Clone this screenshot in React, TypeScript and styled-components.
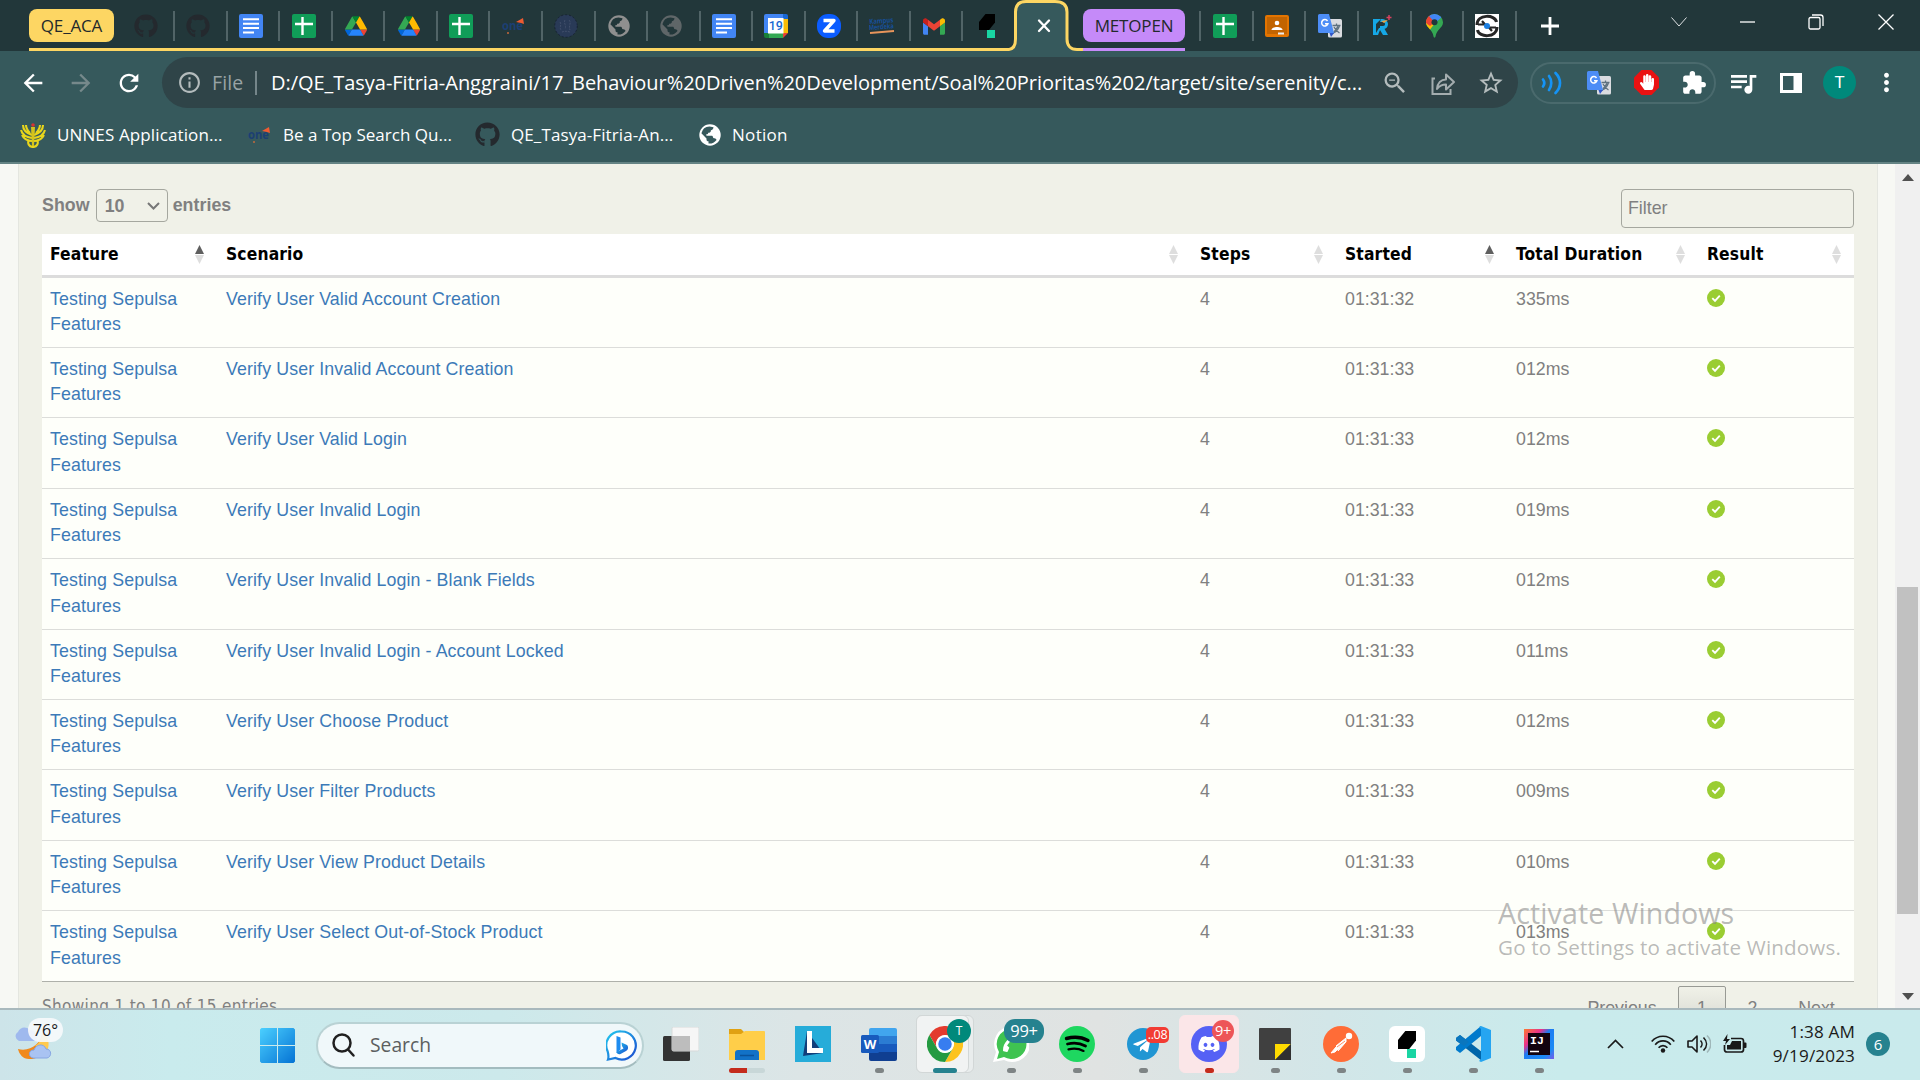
import React from "react";
import styled, { createGlobalStyle } from "styled-components";
import {
  MdArrowBack, MdArrowForward, MdRefresh, MdInfoOutline, MdZoomOut, MdStarBorder,
  MdExtension, MdOutlineQueueMusic, MdMoreVert,
} from "react-icons/md";
import { FaGithub, FaDiscord, FaHandPaper, FaTelegramPlane, FaPhoneAlt } from "react-icons/fa";

const ui = `"Open Sans", "Noto Sans", sans-serif`;
const arial = `"Liberation Sans", Arial, sans-serif`;
const verdana = `"DejaVu Sans Condensed", "DejaVu Sans", sans-serif`;

const GlobalStyle = createGlobalStyle`
  *, *::before, *::after { box-sizing: border-box; }
  body { margin: 0; overflow: hidden; }
  svg { display: block; flex: none; }
`;

const Screen = styled.div`
  width: 1920px;
  height: 1080px;
  overflow: hidden;
  display: flex;
  flex-direction: column;
  background: #f7f8f4;
`;

/* ---------- Tab strip ---------- */

const TabStrip = styled.div`
  height: 51px;
  flex: none;
  display: flex;
  background: #22373a;
`;
const TabGroup = styled.div<{ $line: string; $width: number }>`
  width: ${p => p.$width}px;
  flex: none;
  display: flex;
  border-bottom: 3px solid ${p => p.$line};
`;
const GroupChip = styled.div<{ $bg: string; $width: number; $spacing?: number }>`
  width: ${p => p.$width}px;
  height: 33px;
  margin-top: 9px;
  flex: none;
  border-radius: 8px;
  background: ${p => p.$bg};
  color: #23292b;
  display: flex;
  align-items: center;
  justify-content: center;
  white-space: nowrap;
  font: 400 17px/33px ${ui};
  letter-spacing: ${p => p.$spacing ?? 0}px;
`;
const Tab = styled.div<{ $width?: number; $last?: boolean }>`
  width: ${p => p.$width ?? 52.55}px;
  height: 51px;
  flex: none;
  padding: 11px 6px 0 0;
  display: flex;
  position: relative;
  justify-content: center;
  &::after {
    content: "";
    display: ${p => (p.$last ? "none" : "block")};
    position: absolute;
    right: 0;
    top: 11px;
    width: 2px;
    height: 30px;
    background: #516467;
  }
`;
const TabIcon = styled.div`
  height: 30px;
  display: flex;
  align-items: center;
`;
const ActiveTab = styled.div`
  width: 74px;
  height: 51px;
  flex: none;
`;
const StripGap = styled.div<{ $width: number }>`
  width: ${p => p.$width}px;
  flex: none;
`;
const NewTab = styled.div`
  width: 66px;
  display: flex;
  align-items: center;
  justify-content: center;
`;
const WindowControls = styled.div`
  margin-left: auto;
  display: flex;
  height: 44px;
  align-items: center;
`;
const WindowButton = styled.div<{ $width: number }>`
  width: ${p => p.$width}px;
  display: flex;
  justify-content: center;
`;

/* ---------- Toolbar ---------- */

const Toolbar = styled.div`
  height: 63px;
  flex: none;
  display: flex;
  align-items: center;
  background: #36595c;
`;
const NavButtons = styled.div`
  width: 162px;
  display: flex;
  padding-left: 19px;
  gap: 20px;
  color: #fff;
`;
const Omnibox = styled.div`
  width: 1356px;
  height: 51px;
  border-radius: 26px;
  background: #2f4448;
  display: flex;
  align-items: center;
  padding-left: 15px;
  color: #b4bcbd;
`;
const Scheme = styled.span`
  width: 43px;
  margin-left: 10px;
  font: 400 19.5px/26px ${ui};
  color: #98a3a5;
  letter-spacing: 0.1px;
`;
const Divider = styled.span`
  width: 2px;
  height: 24px;
  background: #75868a;
`;
const Url = styled.span`
  width: 1110px;
  margin-left: 14px;
  white-space: nowrap;
  overflow: hidden;
  color: #fff;
  font: 400 20px/28px ${ui};
  letter-spacing: -0.04px;
`;
const OmniActions = styled.div`
  display: flex;
  gap: 20px;
`;
const Extensions = styled.div`
  width: 186px;
  height: 42px;
  margin-left: 12px;
  border: 2px solid #4a6a6d;
  border-radius: 21px;
  display: flex;
  align-items: center;
  justify-content: space-between;
  padding: 0 6px;
`;
const BrowserActions = styled.div`
  display: flex;
  align-items: center;
  color: #fff;
  padding-left: 11px;
`;
const Avatar = styled.div<{ $size: number; $font: number }>`
  width: ${p => p.$size}px;
  height: ${p => p.$size}px;
  border-radius: 50%;
  background: #00897b;
  color: #fff;
  text-align: center;
  font: 400 ${p => p.$font}px/${p => p.$size}px Roboto, sans-serif;
`;
const Action = styled.div<{ $width: number }>`
  width: ${p => p.$width}px;
  display: flex;
  justify-content: center;
`;

const Bookmarks = styled.div`
  height: 50px;
  flex: none;
  display: flex;
  background: #36595c;
  border-bottom: 2px solid #648384;
  padding: 0 0 7px 20px;
`;
const Bookmark = styled.div<{ $width: number; $spacing: number }>`
  width: ${p => p.$width}px;
  display: flex;
  align-items: center;
  gap: 11px;
  white-space: nowrap;
  color: #fff;
  font: 400 17px/24px ${ui};
  letter-spacing: ${p => p.$spacing}px;
`;

/* ---------- Report page ---------- */

const Viewport = styled.div`
  height: 844px;
  flex: none;
  display: flex;
  overflow: hidden;
  background: #f7f8f4;
`;
const Report = styled.main`
  width: 1860px;
  margin-left: 18px;
  padding: 25px 23px 0 23px;
  border: solid #e4e6e0;
  border-width: 0 1px;
  background: #f0f1e8;
  color: #808080;
`;
const Controls = styled.div`
  height: 45px;
  display: flex;
  justify-content: space-between;
`;
const LengthControl = styled.div`
  height: 33px;
  display: flex;
  align-items: center;
  font: 700 17.8px/35px ${arial};
  letter-spacing: 0.05px;
`;
const LengthSelect = styled.div`
  width: 72px;
  height: 33px;
  margin: 0 5px 0 6px;
  padding: 1px 7px 0 8px;
  border: 1px solid #a5a79f;
  border-radius: 4px;
  display: flex;
  align-items: center;
  justify-content: space-between;
`;
const FilterBox = styled.div`
  width: 233px;
  height: 39px;
  padding-left: 6px;
  border: 1px solid #a5a79f;
  border-radius: 4px;
  font: 400 17.8px/37px ${arial};
`;
const columns = "175px 974px 145px 171px 191px 156px";
const HeaderRow = styled.div`
  height: 43.6px;
  display: grid;
  grid-template-columns: ${columns};
  background: #fff;
  border-bottom: 3px solid #dcdcdc;
`;
const HeaderCell = styled.div`
  display: flex;
  justify-content: space-between;
  align-items: center;
  padding: 0 13px 0 9px;
  color: #000;
  font: 700 17.3px/22px ${verdana};
  letter-spacing: 0.15px;
  &:first-child { padding-left: 8px; }
`;
const Body = styled.div`
  border-bottom: 1px solid #aeb0aa;
`;
const Row = styled.div`
  height: 70.4px;
  display: grid;
  grid-template-columns: ${columns};
  background: #fefffa;
  border-bottom: 1px solid #dcddda;
  &:last-child { height: 69.8px; border-bottom: 0; }
`;
const Cell = styled.div<{ $link?: boolean }>`
  padding: 9px 20px 0 9px;
  font: 400 17.8px/25.4px ${arial};
  color: ${p => (p.$link ? "#3c7ab8" : "#808080")};
  letter-spacing: ${p => (p.$link ? 0.11 : 0)}px;
  &:first-child { padding-left: 8px; }
`;
const Result = styled.div`
  padding: 11px 0 0 9px;
`;
const Footer = styled.div`
  display: flex;
  justify-content: space-between;
  font: 400 17px/22px ${verdana};
`;
const Info = styled.div`
  padding-top: 13px;
  letter-spacing: 0.33px;
`;
const Pager = styled.div`
  display: flex;
  padding-top: 4px;
`;
const PageButton = styled.div<{ $current?: boolean; $width: number }>`
  width: ${p => p.$width}px;
  height: 40px;
  text-align: center;
  padding-top: ${p => (p.$current ? 10 : 11)}px;
  border: ${p => (p.$current ? "1px solid #989a94" : "0")};
  border-radius: 2px;
  background: ${p => (p.$current ? "linear-gradient(#f0f1e8, #d8d9d1)" : "none")};
  font: 400 17.8px/22px ${arial};
`;
const Scrollbar = styled.div`
  width: 25px;
  margin-left: auto;
  display: flex;
  flex-direction: column;
  align-items: center;
  background: #f0f0f0;
  padding: 10px 0 8px;
`;
const Thumb = styled.div`
  width: 21px;
  height: 327px;
  margin: 406px 0 auto;
  background: #c1c1c1;
`;

/* ---------- Watermark ---------- */

const Watermark = styled.div`
  position: absolute;
  left: 1498px;
  top: 893px;
  white-space: nowrap;
  color: rgba(135, 135, 135, 0.58);
  font-family: ${ui};
`;
const WatermarkTitle = styled.div`
  font-size: 28.6px;
  line-height: 39px;
  letter-spacing: 0.1px;
`;
const WatermarkText = styled.div`
  font-size: 20.6px;
  line-height: 31px;
  letter-spacing: 0.16px;
`;

/* ---------- Taskbar ---------- */

const Taskbar = styled.footer`
  height: 72px;
  flex: none;
  display: flex;
  align-items: center;
  border-top: 2px solid #a9b9bd;
  background: linear-gradient(90deg, #cde4e9 0, #c9ebed 170px, #cce9eb 500px, #dce5e6 800px, #e0e3e2 1100px, #d2e6e8 1330px, #c9ebec 1560px, #c9eaec 1920px);
`;
const Weather = styled.div`
  width: 248px;
  height: 70px;
  padding: 8px 0 0 13px;
  display: grid;
  grid-template-columns: 52px;
`;
const WeatherArt = styled.div`
  grid-area: 1 / 1;
`;
const Temperature = styled.div`
  grid-area: 1 / 1;
  z-index: 1;
  width: 35px;
  height: 24px;
  margin-left: 15px;
  border-radius: 12px;
  background: rgba(247, 250, 252, 0.9);
  color: #1b1b1b;
  text-align: center;
  font: 400 16px/24px ${ui};
`;
const StartButton = styled.div`
  width: 68px;
  padding-left: 12px;
`;
const SearchBox = styled.div`
  width: 328px;
  height: 47px;
  padding: 0 5px 0 14px;
  border: 2px solid #b9d2d4;
  border-bottom-color: #a3bcbf;
  border-radius: 24px;
  background: #f0f8fa;
  display: flex;
  align-items: center;
  color: #5c5f60;
  font: 400 19.3px/26px ${ui};
`;
const SearchLabel = styled.span`
  margin-left: 14px;
  margin-right: auto;
`;
const Apps = styled.div`
  display: flex;
  margin-left: 4px;
`;
const TaskbarApp = styled.div`
  width: 66px;
  height: 70px;
  display: flex;
  align-items: center;
  justify-content: center;
  position: relative;
`;
const AppTile = styled.div<{ $bg: string; $width: number; $edge?: string; $left?: number }>`
  position: absolute;
  left: ${p => p.$left ?? 3}px;
  top: 5px;
  width: ${p => p.$width}px;
  height: 58px;
  border-radius: 6px;
  border: 1px solid ${p => p.$edge ?? p.$bg};
  background: ${p => p.$bg};
`;
const AppArt = styled.div`
  position: relative;
  margin-top: -2px;
`;
const Indicator = styled.div<{ $width: number; $color: string; $track?: boolean }>`
  position: absolute;
  bottom: 7px;
  left: ${p => (p.$track ? 15 : 33 - p.$width / 2)}px;
  width: ${p => (p.$track ? 36 : p.$width)}px;
  height: 5px;
  border-radius: 3px;
  background: ${p => (p.$track ? `linear-gradient(90deg, ${p.$color} 50%, #c8d7d8 50%)` : p.$color)};
`;
const Badge = styled.div<{ $x: number; $y: number; $w: number; $h: number; $bg: string; $font: number; $r?: number }>`
  position: absolute;
  left: ${p => p.$x}px;
  top: ${p => p.$y}px;
  width: ${p => p.$w}px;
  height: ${p => p.$h}px;
  border-radius: ${p => p.$r ?? p.$h / 2}px;
  background: ${p => p.$bg};
  color: #fff;
  text-align: center;
  font: 400 ${p => p.$font}px/${p => p.$h}px ${ui};
  letter-spacing: -0.3px;
`;
const Tray = styled.div`
  margin-left: auto;
  margin-right: 30px;
  display: flex;
  align-items: center;
  color: #1a1a1a;
`;
const TrayIcon = styled.div<{ $width: number }>`
  width: ${p => p.$width}px;
  margin-top: -2px;
`;
const Clock = styled.div`
  width: 108px;
  margin-top: -2px;
  text-align: right;
  font: 400 17.1px/24px ${ui};
  letter-spacing: 0.15px;
`;
const Notifications = styled.div`
  width: 24px;
  height: 24px;
  margin-top: -2px;
  margin-left: 11px;
  border-radius: 50%;
  background: #26828f;
  color: #fff;
  text-align: center;
  font: 400 15px/24px ${ui};
`;

/* ---------- Icons ---------- */

const Docs = () => (
  <svg width="24" height="24" viewBox="0 0 24 24"><rect width="24" height="24" rx="2" fill="#4285f4" /><path d="M4 5.3h16M4 9.7h16M4 14.1h16M4 18.5h11" stroke="#fff" strokeWidth="2" /></svg>
);
const Sheets = () => (
  <svg width="24" height="24" viewBox="0 0 24 24"><rect width="24" height="24" rx="2" fill="#109d58" /><path d="M3 10h18M10.5 3v18" stroke="#fff" strokeWidth="2.4" /></svg>
);
const Drive = () => (
  <svg width="22" height="20" viewBox="0 0 87.3 78">
    <path d="M6.6 66.85l3.85 6.65c.8 1.4 1.95 2.5 3.3 3.3L27.5 53H0c0 1.55.4 3.1 1.2 4.5z" fill="#0066da" />
    <path d="M43.65 25L29.9 1.2c-1.35.8-2.5 1.9-3.3 3.3l-25.4 44A9.06 9.06 0 000 53h27.5z" fill="#34a853" />
    <path d="M73.55 76.8c1.35-.8 2.5-1.9 3.3-3.3l1.6-2.75L86.1 57.5c.8-1.4 1.2-2.95 1.2-4.5H59.8l5.85 11.5z" fill="#ea4335" />
    <path d="M43.65 25L57.4 1.2C56.05.4 54.5 0 52.9 0H34.4c-1.6 0-3.15.45-4.5 1.2z" fill="#00832d" />
    <path d="M59.8 53H27.5L13.75 76.8c1.35.8 2.9 1.2 4.5 1.2h50.8c1.6 0 3.15-.45 4.5-1.2z" fill="#2684fc" />
    <path d="M73.4 26.5l-12.7-22c-.8-1.4-1.95-2.5-3.3-3.3L43.65 25 59.8 53h27.45c0-1.55-.4-3.1-1.2-4.5z" fill="#ffba00" />
  </svg>
);
const OneLogo = () => (
  <svg width="24" height="18" viewBox="0 0 24 18">
    <text x="0" y="13" fontFamily="Open Sans" fontSize="12" fontWeight="700" fill="#1c3f73" textLength="21" lengthAdjust="spacingAndGlyphs">one</text>
    <path d="M14 5l7-4 1 6-3-1z" fill="#ee5b32" /><circle cx="6" cy="16" r="1" fill="#c46a3b" />
  </svg>
);
const Seal = () => (
  <svg width="24" height="24" viewBox="0 0 24 24"><circle cx="12" cy="12" r="11.3" fill="#293a57" stroke="#182333" strokeDasharray="2 2" /><path d="M6 8c2 3-1 5 1 8M11 6c-2 3 2 5 0 9M15 6c3 3-1 6 1 10M8 18c2-1 5-1 8 0" stroke="#414f6b" fill="none" strokeDasharray="2 1" /></svg>
);
const Globe = ({ color, ink }: { color: string; ink: string }) => (
  <svg width="22" height="22" viewBox="0 0 22 22">
    <circle cx="11" cy="11" r="10.7" fill={color} />
    <path d="M10.5 2.6l4 .6c-.2 2-1 2.6-2.6 3 .2 2-1.2 2.6-2.7 2.6 0 1.3-.9 1.6-2 1.5l.3 1.4h5c1 0 1.5.7 1.5 1.6 0 .8.8 1 1.5 1 1 0 1.7.8 2 1.6a9 9 0 01-8 3.6v-2.2c-1.5 0-2-.8-2-1.9v-1L2.4 9.3A8.800 8.800 0 0110.500 2.600z" fill={ink} />
  </svg>
);
const Calendar = () => (
  <svg width="24" height="24" viewBox="0 0 24 24">
    <path d="M0 2a2 2 0 012-2h17v5H5v14H0z" fill="#4285f4" /><path d="M19 0h3a2 2 0 012 2v3h-5z" fill="#1967d2" />
    <path d="M19 5h5v14h-5z" fill="#fbbc04" /><path d="M0 19h5v5H2a2 2 0 01-2-2z" fill="#188038" /><path d="M5 19h14v5H5z" fill="#34a853" /><path d="M19 19h5l-5 5z" fill="#ea4335" />
    <rect x="4" y="4" width="15.500" height="15.500" fill="#fff" /><text x="11.800" y="16.300" textAnchor="middle" fontFamily="Roboto" fontWeight="500" fontSize="12.500" fill="#1967d2">19</text>
  </svg>
);
const ZLogo = () => (
  <svg width="24" height="24" viewBox="0 0 24 24"><rect width="24" height="24" rx="11" fill="#0b5cff" /><path d="M6.500 6.500h10.500l-9.500 10.500h10" stroke="#fff" strokeWidth="3.400" fill="none" strokeLinejoin="round" /></svg>
);
const Kampus = () => (
  <svg width="26" height="18" viewBox="0 0 26 18">
    <g transform="rotate(-4)" fontFamily="Open Sans" fontWeight="700" fill="#16509a"><text x="0" y="7" fontSize="7" textLength="24" lengthAdjust="spacingAndGlyphs">Kampus</text><text x="-1" y="13" fontSize="7" textLength="25" lengthAdjust="spacingAndGlyphs">Merdeka</text></g>
    <path d="M1 16l24-2" stroke="#e8955b" strokeWidth="1.800" />
  </svg>
);
const Gmail = () => (
  <svg width="22" height="17" viewBox="52 42 88 66">
    <path fill="#4285f4" d="M58 108h14V74L52 59v43c0 3.320 2.690 6 6 6" /><path fill="#34a853" d="M120 108h14c3.320 0 6-2.690 6-6V59l-20 15" />
    <path fill="#fbbc04" d="M120 48v26l20-15v-8c0-7.420-8.470-11.650-14.400-7.200" /><path fill="#ea4335" d="M72 74V48l24 18 24-18v26L96 92" /><path fill="#c5221f" d="M52 51v8l20 15V48l-5.600-4.200c-5.940-4.450-14.400-.22-14.400 7.200" />
  </svg>
);
const Katalon = ({ size }: { size: number }) => (
  <svg width={size} height={size * 1.5} viewBox="0 0 16 24"><path d="M6.500 0H16v8.500L10 16H0V8z" fill="#000" /><rect x="8" y="16" width="8" height="8" fill="#19d5a3" /></svg>
);
const Classroom = () => (
  <svg width="24" height="22" viewBox="0 0 24 22"><rect width="24" height="22" rx="2" fill="#e37400" /><rect x="2" y="2" width="20" height="17" fill="#c26401" /><circle cx="12" cy="8" r="2.300" fill="#fff" /><path d="M6.500 15c0-4 11-4 11 0z" fill="#fff" /><rect x="13" y="17.500" width="6" height="2" fill="#eee" /></svg>
);
const Translate = () => (
  <svg width="24" height="24" viewBox="0 0 24 24">
    <rect x="10" y="5" width="14" height="18.500" rx="1.500" fill="#dadce0" /><path d="M15 19.500l5-7M14.500 11.500h8M18.500 9.500v2M21.500 11.500c-1 4-3 6-6 7.500M16 13c1.500 3 3 4.500 5.500 6" stroke="#5f7280" strokeWidth="1.300" fill="none" />
    <path d="M1.500 0H11l5 19H1.500A1.500 1.500 0 010 17.500v-16A1.500 1.500 0 011.500 0z" fill="#4d8df6" /><path d="M11.500 19H16l-3 4z" fill="#3157c8" />
    <path d="M9.500 7A3.200 3.200 0 109.900 9.800H7" stroke="#fff" strokeWidth="1.500" fill="none" />
  </svg>
);
const RBird = () => (
  <svg width="20" height="22" viewBox="0 0 20 22"><path d="M1 4h8l-5 5v9l3-5 5 0 4 7h-5l-3-5-2 5H1z" fill="#15a8e6" /><path d="M9 4c4 0 7 2 7 5 0 3-2 5-5 5H8V11h3c1.500 0 2-1 2-2s-1-2-2-2H8z" fill="#15a8e6" /><path d="M9 6l7-1-4 3z" fill="#e9a23c" /><path d="M14.500 2.500h5M17 0v5" stroke="#d6415f" strokeWidth="1.500" /></svg>
);
const MapsPin = () => (
  <svg width="17" height="24" viewBox="0 0 17 24">
    <clipPath id="pin"><path d="M8.500 0A8.400 8.400 0 000 8.500C0 14 6.500 15 7.500 22.500c.2 1.500 1.800 1.500 2 0C10.500 15 17 14 17 8.500A8.400 8.400 0 008.500 0z" /></clipPath>
    <g clipPath="url(#pin)"><path d="M0 0h17v24H0z" fill="#34a853" /><path d="M0 15V6l9 3L3 17z" fill="#fbbc04" /><path d="M0 0h5l4 8-5 4-4-3z" fill="#ea4335" /><path d="M3 2L9 9l7-6-3-3H5z" fill="#4285f4" /><path d="M2 2l6 6-5 3-3-5z" fill="#ea4335" /></g>
    <circle cx="8.500" cy="8.300" r="3" fill="#20373a" />
  </svg>
);
const Orbit = () => (
  <svg width="24" height="24" viewBox="0 0 24 24"><rect width="24" height="24" fill="#fff" /><path d="M2 11C2 0 20 0 21.500 8M22 13c0 11-18 11-19.500 3" stroke="#262626" strokeWidth="3" fill="none" /><path d="M3 10.500h7L7 7M21 13.500h-7l3 3.500" stroke="#262626" strokeWidth="2.200" fill="none" /><circle cx="12" cy="12" r="3" fill="#1b7ee0" /></svg>
);
const Garuda = () => (
  <svg width="26" height="26" viewBox="0 0 26 26"><g fill="none" stroke="#e8d51c" strokeWidth="2.100"><path d="M12 13C6 11 3 7 3 3M12 16C5 15 2 12 1 8M12 19c-5 0-8-2-10-6M14 13c6-2 9-6 9-10M14 16c7-1 10-4 11-8M14 19c5 0 8-2 10-6M10 11C8 9 6 6 6 3M16 11c2-2 4-5 4-8" /><path d="M9 18c-2 3 0 7 4 7s6-4 4-7" /></g><path d="M11 5h4l-1 19h-2z" fill="#d4c21c" /><circle cx="13" cy="3" r="1.800" fill="#d83232" /></svg>
);
const ShareIcon = () => (
  <svg width="28" height="28" viewBox="0 0 28 28" fill="none" stroke="#a4adaf" strokeWidth="2"><path d="M6 9.500H3.500V25h18v-5" /><path d="M8 20c.5-6 4-9.500 9-9.500V5.500l8 7.500-8 7.500v-5c-4 0-6.500 1-9 4.500z" strokeLinejoin="round" /></svg>
);
const Waves = () => (
  <svg width="22" height="24" viewBox="0 0 22 24" fill="none" stroke="#1593f5" strokeWidth="2.700" strokeLinecap="round"><path d="M2 8.500c1.500 2 1.500 5 0 7M8 5c3 4 3 10 0 14M14.500 2c6 6 6 14 0 20" /></svg>
);
const StopHand = () => (
  <svg width="25" height="25" viewBox="0 0 25 25"><path d="M7.500 0h10L25 7.500v10L17.500 25h-10L0 17.500v-10z" fill="#ea1212" /><g transform="translate(5 4)"><FaHandPaper size={16} color="#fff" /></g></svg>
);
const SidePanel = () => (
  <svg width="22" height="22" viewBox="0 0 22 22"><path d="M0 1h22v20H0z" fill="#fff" /><path d="M3 4h10.500v14H3z" fill="#36595c" /></svg>
);
const Check = () => (
  <svg width="18" height="18" viewBox="0 0 18 18"><circle cx="9" cy="9" r="9" fill="#9acd32" /><path d="M5.300 9.200l2.700 2.700 4.800-5.300" stroke="#fff" strokeWidth="1.900" fill="none" /></svg>
);
const SortArrows = ({ up }: { up?: boolean }) => (
  <svg width="9" height="19" viewBox="0 0 9 19"><path d="M4.500 0L9 9H0z" fill={up ? "#5f5f5f" : "#dedede"} /><path d="M0 10h9l-4.500 9z" fill="#dedede" /></svg>
);
const Arrow = ({ down }: { down?: boolean }) => (
  <svg width="12" height="7" viewBox="0 0 12 7"><path d={down ? "M0 0h12L6 7z" : "M6 0l6 7H0z"} fill="#505050" /></svg>
);

const WindowsLogo = () => (
  <svg width="35" height="35" viewBox="0 0 35 35">
    <defs><linearGradient id="win" x1="0" y1="0" x2="1" y2="1" gradientUnits="objectBoundingBox"><stop offset="0" stopColor="#4bd0ff" /><stop offset="1" stopColor="#0573d4" /></linearGradient></defs>
    <path d="M1.500 0H17v17H0V1.500zM18 0h15.500L35 1.500V17H18zM0 18h17v17H1.500L0 33.500zM18 18h17v15.500L33.500 35H18z" fill="url(#win)" />
  </svg>
);
const Bing = () => (
  <svg width="31" height="31" viewBox="0 0 31 31">
    <defs><linearGradient id="bing" x1="0" y1="0" x2="1" y2="1"><stop offset="0" stopColor="#22c9ee" /><stop offset="1" stopColor="#1b4bd0" /></linearGradient></defs>
    <path d="M15.500 1.500a14 14 0 11-6 26.500L2 29.500c1-3 .5-5-.3-8A14 14 0 0115.500 1.500z" fill="#fff" stroke="url(#bing)" strokeWidth="2.200" />
    <path d="M10.500 6l4 1.500v12l-4 3.500z" fill="#1f8cf0" /><path d="M15.500 12.500l5.500 2.500c2 2 1 5-1 6l-5.500 3c-2 .7-4-.5-4-2l7-3.500-1.500-2.500z" fill="url(#bing)" />
  </svg>
);
const SearchGlyph = () => (
  <svg width="24" height="26" viewBox="0 0 24 26" fill="none" stroke="#202020" strokeWidth="2.500" strokeLinecap="round"><circle cx="10" cy="11" r="8.500" /><path d="M16.500 18l5 5.500" /></svg>
);
const WeatherIcon = () => (
  <svg width="46" height="44" viewBox="0 0 46 44">
    <path d="M29 15c9 12 0 27-13 26C10 41 6 36 5 31c12 3 23-5 24-16z" fill="#f08a1d" />
    <path d="M30 14c6 5 7 13 4 19l-12-5c5-3 7-8 8-14z" fill="#ffc94d" />
    <path d="M6 23a5 5 0 01-1-9c2-5 8-6 12-2 4 0 7 4 7 11z" fill="#9fb9ee" />
    <path d="M20 40c-5-1-5-8 1-8 2-6 10-7 12-1 6 0 6 8 1 9z" fill="#a9c3f2" stroke="#86a6e3" />
  </svg>
);
const TaskView = () => (
  <svg width="36" height="34" viewBox="0 0 36 34"><rect y="9" width="27" height="25" rx="1.500" fill="#333" /><rect x="9" y="0" width="27" height="24" rx="1.500" fill="#f6f6f6" stroke="#d7dada" /><path d="M9 9h18v15H9z" fill="#bdbdbd" /></svg>
);
const Explorer = () => (
  <svg width="36" height="33" viewBox="0 0 36 33"><path d="M0 1h12l3 3v6H0z" fill="#e0a112" /><path d="M0 6h12l4-3h19a1 1 0 011 1v28H0z" fill="#ffce49" /><path d="M6 32v-7c0-2 1-3 3-3h18c2 0 3 1 3 3v7z" fill="#1272c7" /><path d="M11 27.500h14" stroke="#0a529a" strokeWidth="1.500" /></svg>
);
const LApp = () => (
  <svg width="36" height="36" viewBox="0 0 36 36"><rect width="36" height="36" fill="#26acd9" /><path d="M12 5l-4 25 20-3z" fill="#123f7a" /><path d="M12 5h5v17h11v5H12z" fill="#fff" /></svg>
);
const Word = () => (
  <svg width="36" height="33" viewBox="0 0 36 33"><path d="M8 2q0-2 2-2h24q2 0 2 2v6H8z" fill="#41a5ee" /><path d="M8 8h28v8H8z" fill="#2b7cd3" /><path d="M8 16h28v8H8z" fill="#185abd" /><path d="M8 24h28v7q0 2-2 2H10q-2 0-2-2z" fill="#103f91" /><rect y="7" width="18" height="18" rx="1.500" fill="#185abd" /><text x="9" y="20.500" fontFamily="Open Sans" fontWeight="700" fontSize="13" textAnchor="middle" fill="#fff">W</text></svg>
);
const Chrome = () => (
  <svg width="36" height="36" viewBox="0 0 48 48"><circle cx="24" cy="24" r="24" fill="#fff" /><path d="M24 12h20.800A24 24 0 003.200 12l10.400 18A12 12 0 0124 12z" fill="#e33b2e" /><path d="M34.400 30L24 48A24 24 0 0044.800 12H24a12 12 0 0110.400 18z" fill="#fcc31e" /><path d="M13.600 30L3.200 12A24 24 0 0024 48l10.400-18a12 12 0 01-20.800 0z" fill="#249a41" /><circle cx="24" cy="24" r="11.500" fill="#fff" /><circle cx="24" cy="24" r="9" fill="#377df0" /></svg>
);
const WhatsApp = () => (
  <svg width="36" height="36" viewBox="0 0 36 36"><path d="M18 0a18 18 0 11-7 34L0 36l3-10A18 18 0 0118 0z" fill="#fff" /><path d="M18 3a15 15 0 11-7 28l-7 2 2-7A15 15 0 0118 3z" fill="#3fc351" /><g transform="translate(10 10) rotate(90 8 8)"><FaPhoneAlt size={16} color="#fff" /></g></svg>
);
const Spotify = () => (
  <svg width="36" height="36" viewBox="0 0 36 36"><circle cx="18" cy="18" r="18" fill="#1ed760" /><g fill="none" stroke="#000" strokeLinecap="round"><path d="M7.500 12.500c7-2 15-1.500 21.500 2" strokeWidth="3.400" /><path d="M8.500 18c6-1.500 12.500-1 18 2" strokeWidth="2.800" /><path d="M9.500 23.300c5-1.200 10.500-.8 15 1.600" strokeWidth="2.300" /></g></svg>
);
const Telegram = () => (
  <svg width="32" height="32" viewBox="0 0 32 32"><circle cx="16" cy="16" r="16" fill="#2196d3" /><g transform="translate(5 7)"><FaTelegramPlane size={20} color="#fff" /></g></svg>
);
const Discord = () => (
  <svg width="36" height="36" viewBox="0 0 36 36"><circle cx="18" cy="18" r="18" fill="#5561f5" /><g transform="translate(6.500 6.500)"><FaDiscord size={23} color="#fff" /></g></svg>
);
const Sticky = () => (
  <svg width="32" height="32" viewBox="0 0 32 32"><rect width="32" height="32" rx="1" fill="#404040" /><path d="M16 16h16L16 32z" fill="#ffdb00" /><path d="M32 16v16H16z" fill="#303030" /></svg>
);
const Postman = () => (
  <svg width="36" height="36" viewBox="0 0 36 36"><circle cx="18" cy="18" r="18" fill="#ff6c37" /><circle cx="26" cy="10" r="3.200" fill="#fff" /><path d="M23 12L13 20l2 2 8-6zM13 21l-5 6 4-1 4-4zM22 17l-5 4-2 4z" fill="#fff" stroke="#fff" /><path d="M14 21l8-6" stroke="#ff6c37" strokeWidth=".8" /></svg>
);
const KatalonTile = styled.div`
  width: 36px;
  height: 36px;
  border-radius: 6px;
  background: #fff;
  display: flex;
  align-items: center;
  justify-content: center;
`;
const VsCode = () => (
  <svg width="36" height="36" viewBox="0 0 36 36"><path d="M1 12l4-3 22 17v9L1 14.500z" fill="#0065a9" /><path d="M26 0v10L5 27l-4-3v-3z" fill="#007acc" /><path d="M1 12l4-3 9 7-5 4-8-5.500z" fill="#0a76be" /><path d="M26 0l10 4v28l-10 4-2-1 2-2V3l-2-2z" fill="#25a5f1" /></svg>
);
const IntelliJ = () => (
  <svg width="30" height="30" viewBox="0 0 30 30"><defs><linearGradient id="ij" x1="0" y1="0" x2="1" y2="1"><stop offset="0" stopColor="#fc7a2f" /><stop offset=".3" stopColor="#e8308b" /><stop offset=".45" stopColor="#1d7cf2" /><stop offset=".8" stopColor="#1b8af5" /><stop offset="1" stopColor="#7a5be8" /></linearGradient></defs><rect width="30" height="30" fill="url(#ij)" /><rect x="4" y="4" width="22" height="22" fill="#12030f" /><text x="6" y="15" fontFamily="Liberation Mono" fontWeight="700" fontSize="11.500" fill="#fff">IJ</text><path d="M6 22.500h9" stroke="#fff" strokeWidth="1.500" /></svg>
);

/* ---------- Data ---------- */

const groupTabs: React.ReactNode[] = [
  <FaGithub size={24} color="#24292e" />, <FaGithub size={24} color="#24292e" />,
  <Docs />, <Sheets />, <Drive />, <Drive />, <Sheets />, <OneLogo />, <Seal />,
  <Globe color="#8f8f8f" ink="#22373a" />, <Globe color="#5f6668" ink="#22373a" />,
  <Docs />, <Calendar />, <ZLogo />, <Kampus />, <Gmail />, <Katalon size={16} />,
];
const metopenTabs = [<Sheets />, <Classroom />, <Translate />, <RBird />, <MapsPin />, <Orbit />];

const scenarios: [string, string, string][] = [
  ["Verify User Valid Account Creation", "01:31:32", "335ms"],
  ["Verify User Invalid Account Creation", "01:31:33", "012ms"],
  ["Verify User Valid Login", "01:31:33", "012ms"],
  ["Verify User Invalid Login", "01:31:33", "019ms"],
  ["Verify User Invalid Login - Blank Fields", "01:31:33", "012ms"],
  ["Verify User Invalid Login - Account Locked", "01:31:33", "011ms"],
  ["Verify User Choose Product", "01:31:33", "012ms"],
  ["Verify User Filter Products", "01:31:33", "009ms"],
  ["Verify User View Product Details", "01:31:33", "010ms"],
  ["Verify User Select Out-of-Stock Product", "01:31:33", "013ms"],
];
const headers: [string, boolean][] = [
  ["Feature", true], ["Scenario", false], ["Steps", false], ["Started", true], ["Total Duration", false], ["Result", false],
];

const disabled = "#76898b";
const running = "#7e8485";

export default function App() {
  return (
    <Screen>
      <GlobalStyle />
      <TabStrip>
        <StripGap $width={29} />
        <TabGroup $line="#fdd663" $width={980}>
          <GroupChip $bg="#fdd663" $width={85} $spacing={-0.15}>QE_ACA</GroupChip>
          <StripGap $width={8.6} />
          {groupTabs.map((icon, i) => (
            <Tab key={i} $last={i === groupTabs.length - 1}><TabIcon>{icon}</TabIcon></Tab>
          ))}
        </TabGroup>
        <ActiveTab>
          <svg width="74" height="51" viewBox="0 0 74 51">
            <path d="M-1 49.500C5 49.500 6.500 45 6.500 39V12C6.500 5 10 1.500 17 1.500H46C54 1.500 58 5 58 12V39C58 45 61 49.500 68 49.500H74V51H-1z" fill="#36595c" />
            <path d="M-1 49.500C5 49.500 6.500 45 6.500 39V12C6.500 5 10 1.500 17 1.500H46C54 1.500 58 5 58 12V39C58 45 61 49.500 68 49.500H74" fill="none" stroke="#fdd663" strokeWidth="3" />
            <path d="M30 20.500l10 10.500M40 20.500L30 31" stroke="#fff" strokeWidth="2.300" strokeLinecap="round" />
          </svg>
        </ActiveTab>
        <TabGroup $line="#c58af9" $width={102}>
          <GroupChip $bg="#c58af9" $width={102} $spacing={-0.15}>METOPEN</GroupChip>
        </TabGroup>
        <Tab $width={16.4} />
        {metopenTabs.map((icon, i) => <Tab key={i}><TabIcon>{icon}</TabIcon></Tab>)}
        <NewTab>
          <svg width="18" height="18" viewBox="0 0 18 18"><path d="M9 0v18M0 9h18" stroke="#fff" strokeWidth="2.800" /></svg>
        </NewTab>
        <WindowControls>
          <WindowButton $width={68}><svg width="16" height="10" viewBox="0 0 16 10"><path d="M.5.500L8 9 15.500.500" stroke="#dfe3e4" fill="none" /></svg></WindowButton>
          <WindowButton $width={68}><svg width="15" height="2" viewBox="0 0 15 2"><path d="M0 1h15" stroke="#fff" strokeWidth="1.300" /></svg></WindowButton>
          <WindowButton $width={70}><svg width="16" height="16" viewBox="0 0 16 16"><g fill="none" stroke="#fff" strokeWidth="1.300"><rect x="1" y="3.500" width="11" height="11.500" rx="1.500" /><path d="M4 1h8.500Q15 1 15 3.500V12" /></g></svg></WindowButton>
          <WindowButton $width={69}><svg width="16" height="16" viewBox="0 0 16 16"><path d="M.5.500l15 15M15.500.500l-15 15" stroke="#fff" strokeWidth="1.300" /></svg></WindowButton>
        </WindowControls>
      </TabStrip>

      <Toolbar>
        <NavButtons>
          <MdArrowBack size={28} /><MdArrowForward size={28} color={disabled} /><MdRefresh size={28} />
        </NavButtons>
        <Omnibox>
          <MdInfoOutline size={25} />
          <Scheme>File</Scheme>
          <Divider />
          <Url>D:/QE_Tasya-Fitria-Anggraini/17_Behaviour%20Driven%20Development/Soal%20Prioritas%202/target/site/serenity/c...</Url>
          <OmniActions>
            <MdZoomOut size={28} /><ShareIcon /><MdStarBorder size={28} />
          </OmniActions>
        </Omnibox>
        <Extensions>
          <Action $width={28}><Waves /></Action>
          <Action $width={28}><Translate /></Action>
          <Action $width={28}><StopHand /></Action>
          <Action $width={28}><MdExtension size={26} color="#fff" /></Action>
        </Extensions>
        <BrowserActions>
          <Action $width={31}><MdOutlineQueueMusic size={32} /></Action>
          <Action $width={65}><SidePanel /></Action>
          <Action $width={33}><Avatar $size={33} $font={17}>T</Avatar></Action>
          <Action $width={61}><MdMoreVert size={29} /></Action>
        </BrowserActions>
      </Toolbar>

      <Bookmarks>
        <Bookmark $width={228} $spacing={0.12}><Garuda />UNNES Application...</Bookmark>
        <Bookmark $width={227} $spacing={0.02}><OneLogo />Be a Top Search Qu...</Bookmark>
        <Bookmark $width={224} $spacing={0.1}><FaGithub size={25} color="#24292e" />QE_Tasya-Fitria-An...</Bookmark>
        <Bookmark $width={120} $spacing={0.3}><Globe color="#fff" ink="#36595c" />Notion</Bookmark>
      </Bookmarks>

      <Viewport>
        <Report>
          <Controls>
            <LengthControl>
              Show
              <LengthSelect>10<svg width="13" height="8" viewBox="0 0 13 8"><path d="M1 1l5.500 5.500L12 1" stroke="#777" strokeWidth="2" fill="none" /></svg></LengthSelect>
              entries
            </LengthControl>
            <FilterBox>Filter</FilterBox>
          </Controls>
          <HeaderRow>
            {headers.map(([name, up]) => <HeaderCell key={name}>{name}<SortArrows up={up} /></HeaderCell>)}
          </HeaderRow>
          <Body>
            {scenarios.map(([name, started, duration]) => (
              <Row key={name}>
                <Cell $link>Testing Sepulsa Features</Cell>
                <Cell $link>{name}</Cell>
                <Cell>4</Cell>
                <Cell>{started}</Cell>
                <Cell>{duration}</Cell>
                <Result><Check /></Result>
              </Row>
            ))}
          </Body>
          <Footer>
            <Info>Showing 1 to 10 of 15 entries</Info>
            <Pager>
              <PageButton $width={112}>Previous</PageButton>
              <PageButton $width={48} $current>1</PageButton>
              <PageButton $width={53}>2</PageButton>
              <PageButton $width={75}>Next</PageButton>
            </Pager>
          </Footer>
        </Report>
        <Scrollbar><Arrow /><Thumb /><Arrow down /></Scrollbar>
      </Viewport>

      <Watermark>
        <WatermarkTitle>Activate Windows</WatermarkTitle>
        <WatermarkText>Go to Settings to activate Windows.</WatermarkText>
      </Watermark>

      <Taskbar>
        <Weather>
          <WeatherArt><WeatherIcon /></WeatherArt>
          <Temperature>76°</Temperature>
        </Weather>
        <StartButton><WindowsLogo /></StartButton>
        <SearchBox><SearchGlyph /><SearchLabel>Search</SearchLabel><Bing /></SearchBox>
        <Apps>
          <TaskbarApp><AppArt><TaskView /></AppArt></TaskbarApp>
          <TaskbarApp><AppArt><Explorer /></AppArt><Indicator $width={36} $color="#c42b1c" $track /></TaskbarApp>
          <TaskbarApp><AppArt><LApp /></AppArt></TaskbarApp>
          <TaskbarApp><AppArt><Word /></AppArt><Indicator $width={9} $color={running} /></TaskbarApp>
          <TaskbarApp>
            <AppTile $bg="#e9eded" $edge="#d2d7d7" $width={58} $left={4} /><AppTile $bg="#f1f3f3" $edge="#d2d7d7" $width={53} $left={4} />
            <AppArt><Chrome /></AppArt>
            <Badge $x={35} $y={9} $w={24} $h={24} $bg="#00897b" $font={12}>T</Badge>
            <Indicator $width={24} $color="#26828f" />
          </TaskbarApp>
          <TaskbarApp><AppArt><WhatsApp /></AppArt><Badge $x={26} $y={9} $w={40} $h={24} $r={11} $bg="#26828f" $font={16.5}>99+</Badge><Indicator $width={9} $color={running} /></TaskbarApp>
          <TaskbarApp><AppArt><Spotify /></AppArt><Indicator $width={9} $color={running} /></TaskbarApp>
          <TaskbarApp><AppArt><Telegram /></AppArt><Badge $x={36} $y={17} $w={23} $h={16} $r={5} $bg="#f23c34" $font={12.5}>..08</Badge><Indicator $width={9} $color={running} /></TaskbarApp>
          <TaskbarApp>
            <AppTile $bg="#fbe6e8" $width={60} />
            <AppArt><Discord /></AppArt><Badge $x={36} $y={10} $w={22} $h={22} $bg="#ed5558" $font={14.5}>9+</Badge><Indicator $width={9} $color="#c42b1c" />
          </TaskbarApp>
          <TaskbarApp><AppArt><Sticky /></AppArt><Indicator $width={9} $color={running} /></TaskbarApp>
          <TaskbarApp><AppArt><Postman /></AppArt><Indicator $width={9} $color={running} /></TaskbarApp>
          <TaskbarApp><AppArt><KatalonTile><Katalon size={18} /></KatalonTile></AppArt><Indicator $width={9} $color={running} /></TaskbarApp>
          <TaskbarApp><AppArt><VsCode /></AppArt><Indicator $width={9} $color={running} /></TaskbarApp>
          <TaskbarApp><AppArt><IntelliJ /></AppArt><Indicator $width={9} $color={running} /></TaskbarApp>
        </Apps>
        <Tray>
          <TrayIcon $width={44}><svg width="17" height="10" viewBox="0 0 17 10"><path d="M1 9l7.500-7.500L16 9" stroke="#1a1a1a" strokeWidth="1.700" fill="none" /></svg></TrayIcon>
          <TrayIcon $width={36}><svg width="24" height="18" viewBox="0 0 24 18"><g fill="none" stroke="#1a1a1a" strokeWidth="1.700"><path d="M.7 6.500c6-7 16.600-7 22.600 0M4.200 9.700c4.200-5 11.400-5 15.600 0M7.600 12.800c2.400-3 6.400-3 8.800 0" /></g><circle cx="12" cy="15.500" r="2.200" fill="#1a1a1a" /></svg></TrayIcon>
          <TrayIcon $width={36}><svg width="24" height="20" viewBox="0 0 24 20"><g fill="none" stroke="#1a1a1a" strokeWidth="1.600"><path d="M1 7h4l5-5v16l-5-5H1z" strokeLinejoin="round" /><path d="M13.500 6.500c2 2 2 5 0 7M16.500 3.500c4 4 4 9 0 13" /><path d="M20 1.500c5 5 5 12 0 17" stroke="#9fb7b9" /></g></svg></TrayIcon>
          <TrayIcon $width={24}><svg width="24" height="20" viewBox="0 0 24 20"><path d="M8 4.500h10q2.500 0 2.500 2.500v8.500q0 2.500-2.500 2.500H4q-2.500 0-2.500-2.500V11" fill="none" stroke="#1a1a1a" strokeWidth="1.700" /><path d="M9 7h9v8.500H4V11h3zM21 8.500h1.500q1 0 1 1v3.500q0 1-1 1H21zM4.500 0L0 7h3l-1 4 5-6H4z" fill="#1a1a1a" /></svg></TrayIcon>
          <Clock>1:38 AM<br />9/19/2023</Clock>
          <Notifications>6</Notifications>
        </Tray>
      </Taskbar>
    </Screen>
  );
}
